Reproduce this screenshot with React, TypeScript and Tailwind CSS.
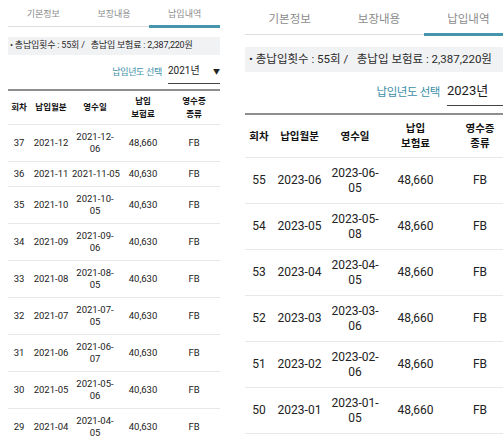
import React from 'react';

type Row = { no: string; month: string; d1: string; d2?: string; amt: string };

const leftRows: Row[] = [
  { no: '37', month: '2021-12', d1: '2021-12-', d2: '06', amt: '48,660' },
  { no: '36', month: '2021-11', d1: '2021-11-05', amt: '40,630' },
  { no: '35', month: '2021-10', d1: '2021-10-', d2: '05', amt: '40,630' },
  { no: '34', month: '2021-09', d1: '2021-09-', d2: '06', amt: '40,630' },
  { no: '33', month: '2021-08', d1: '2021-08-', d2: '05', amt: '40,630' },
  { no: '32', month: '2021-07', d1: '2021-07-', d2: '05', amt: '40,630' },
  { no: '31', month: '2021-06', d1: '2021-06-', d2: '07', amt: '40,630' },
  { no: '30', month: '2021-05', d1: '2021-05-', d2: '06', amt: '40,630' },
  { no: '29', month: '2021-04', d1: '2021-04-', d2: '05', amt: '40,630' },
];

const rightRows: Row[] = [
  { no: '55', month: '2023-06', d1: '2023-06-', d2: '05', amt: '48,660' },
  { no: '54', month: '2023-05', d1: '2023-05-', d2: '08', amt: '48,660' },
  { no: '53', month: '2023-04', d1: '2023-04-', d2: '05', amt: '48,660' },
  { no: '52', month: '2023-03', d1: '2023-03-', d2: '06', amt: '48,660' },
  { no: '51', month: '2023-02', d1: '2023-02-', d2: '06', amt: '48,660' },
  { no: '50', month: '2023-01', d1: '2023-01-', d2: '05', amt: '48,660' },
];

const sizes = {
  small: {
    tabs: 'h-[26px] text-[9px] pt-[3px]',
    info: 'mt-[10px] h-[18px] text-[9px] px-[2px] tracking-[-0.2px]',
    year: 'mt-[8px] h-[21px]',
    label: 'text-[9px] mr-[6px] pb-[7px] tracking-[-0.3px]',
    select: 'w-[52px] h-[21px] pb-[7px] text-[10px]',
    arrow: 'text-[7px]',
    table: 'mt-[5px]',
    cols: 'grid-cols-[22px_42px_46px_50px_52px]',
    head: 'text-[8.5px] leading-[13px] h-[34px]',
    row: 'text-[9.5px] leading-[12px] py-[6px]',
  },
  big: {
    tabs: 'h-[34px] text-[11.5px] pt-[5px]',
    info: 'mt-[12px] h-[25px] text-[11.5px] px-[4px]',
    year: 'mt-[7px] h-[27px]',
    label: 'text-[11.5px] mr-[7px] pb-[8px] tracking-[-0.4px]',
    select: 'w-[66px] h-[27px] pb-[8px] text-[13px]',
    arrow: 'hidden',
    table: 'mt-[7px]',
    cols: 'grid-cols-[28px_53px_58px_63px_66px]',
    head: 'text-[10.5px] leading-[15px] h-[43px]',
    row: 'text-[12px] leading-[15px] py-[7.5px]',
  },
};

const Panel = ({ big, year, rows }: { big: boolean; year: string; rows: Row[] }) => {
  const s = big ? sizes.big : sizes.small;
  return (
    <div className="w-full">
      {/* tabs */}
      <div className="grid grid-cols-3 border-b border-[#dedede]">
        {['기본정보', '보장내용', '납입내역'].map((t, i) => (
          <div key={t} className={`relative flex items-center justify-center text-[#8b8b8b] ${s.tabs}`}>
            {t}
            {i === 2 && <div className="absolute left-0 right-0 bottom-[-2px] h-[3px] bg-[#4596ad]" />}
          </div>
        ))}
      </div>

      <div className={`flex items-center bg-[#f1f2f4] text-[#2a2a2a] whitespace-nowrap ${s.info}`}>
        • 총납입횟수 : 55회 /&nbsp;&nbsp; 총납입 보험료 : 2,387,220원
      </div>

      {/* year select */}
      <div className={`flex justify-end items-end ${s.year}`}>
        <span className={`leading-none text-[#3d8fa8] ${s.label}`}>납입년도 선택</span>
        <div className={`flex items-end justify-between border-b border-[#444] text-[#1a1a1a] shrink-0 ${s.select}`}>
          <span className="leading-none">{year}</span>
          <span className={`leading-none text-[#222] ${s.arrow}`}>▼</span>
        </div>
      </div>

      <div className={`border-t-2 border-[#8e8e8e] ${s.table}`}>
        <div className={`grid items-center text-center font-bold text-[#111] border-b border-[#e8e8e8] ${s.cols} ${s.head}`}>
          <div>회차</div>
          <div>납입월분</div>
          <div>영수일</div>
          <div>납입<br />보험료</div>
          <div>영수증<br />종류</div>
        </div>
        {rows.map(r => (
          <div key={r.no} className={`grid items-center text-center text-[#222] border-b border-[#e8e8e8] ${s.cols} ${s.row}`}>
            <div>{r.no}</div>
            <div className="whitespace-nowrap">{r.month}</div>
            <div className="whitespace-nowrap">
              {r.d1}
              {r.d2 && <><br />{r.d2}</>}
            </div>
            <div>{r.amt}</div>
            <div>FB</div>
          </div>
        ))}
      </div>
    </div>
  );
};

export default function App() {
  return (
    <div
      className="flex w-[503px] h-[438px] overflow-hidden bg-white"
      style={{ fontFamily: 'Roboto, "Noto Sans CJK KR", sans-serif' }}
    >
      <div className="w-[228px] shrink-0 px-[8px]">
        <Panel big={false} year="2021년" rows={leftRows} />
      </div>
      <div className="flex-1 overflow-hidden pl-[17px]">
        <div className="w-[268px]">
          <Panel big={true} year="2023년" rows={rightRows} />
        </div>
      </div>
    </div>
  );
}
